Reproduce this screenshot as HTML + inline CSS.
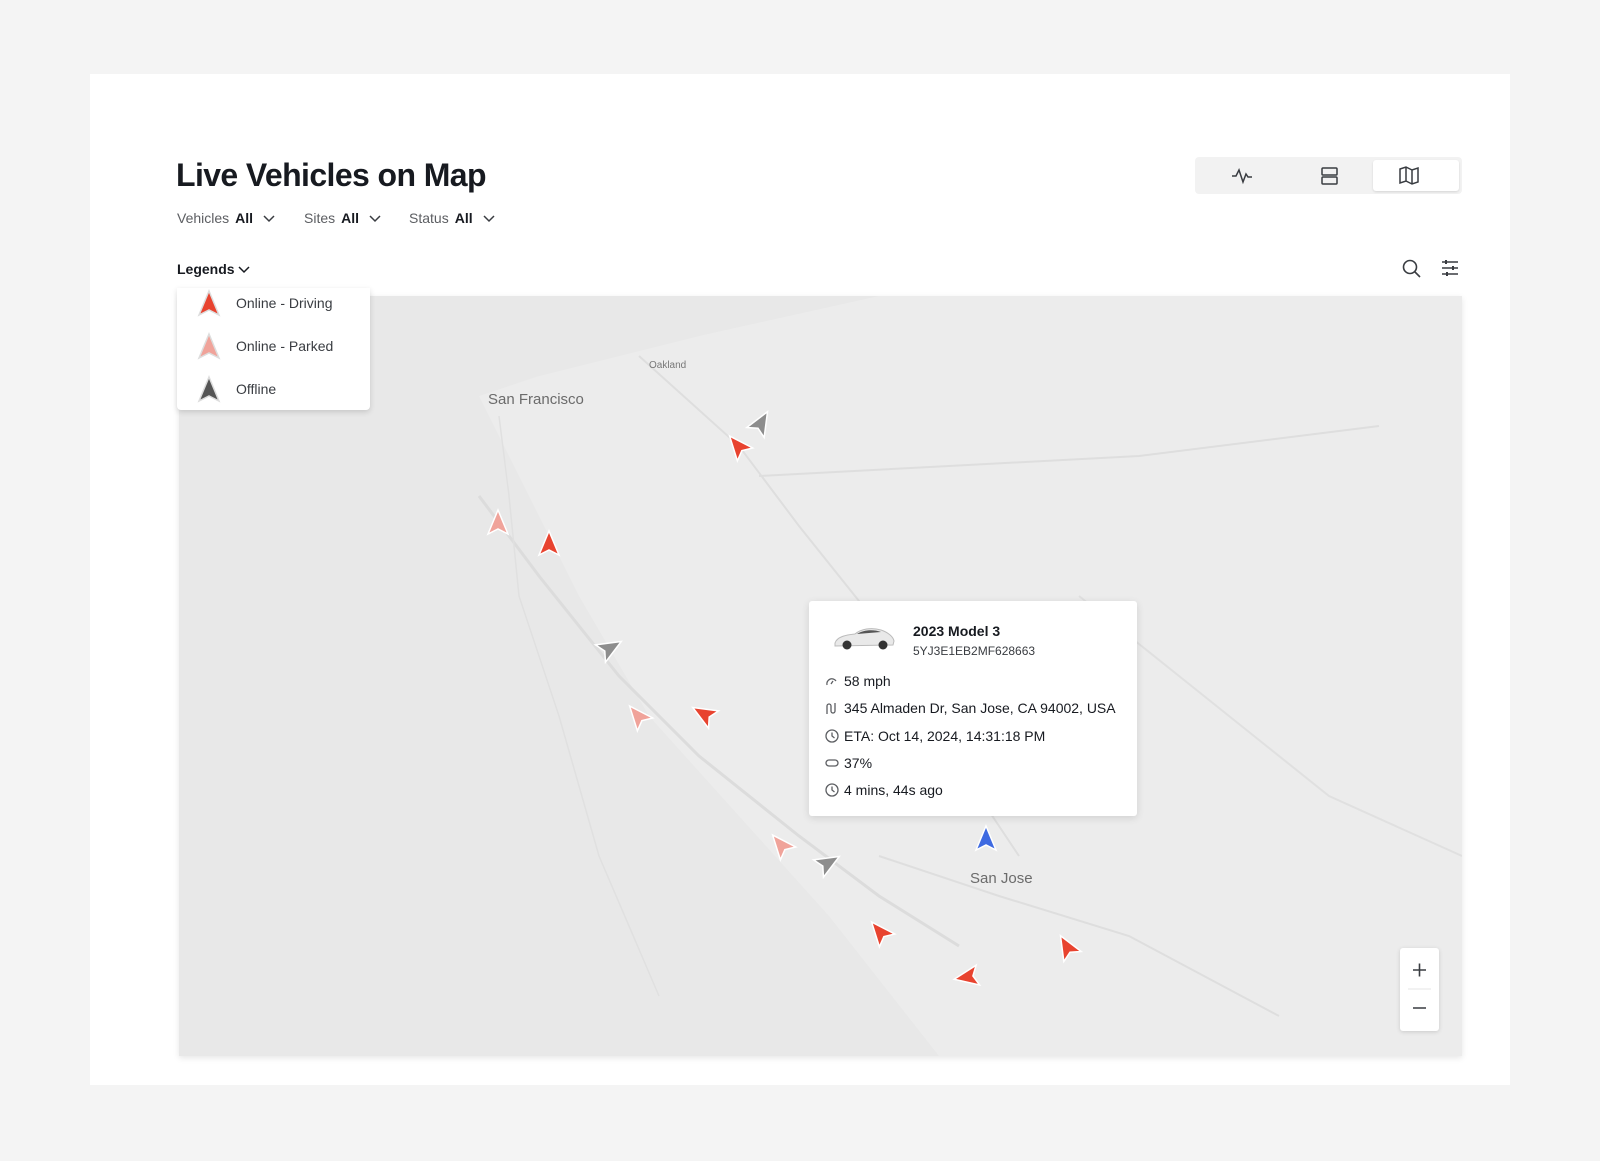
<!DOCTYPE html>
<html><head><meta charset="utf-8">
<style>
*{margin:0;padding:0;box-sizing:border-box}
body{width:1600px;height:1161px;background:#f4f4f4;font-family:"Liberation Sans",Arial,sans-serif;color:#171a20;position:relative;overflow:hidden}
.card{position:absolute;left:90px;top:74px;width:1420px;height:1011px;background:#fff}
h1{position:absolute;left:176px;top:157px;font-size:32px;font-weight:700;letter-spacing:-0.6px;color:#171a20}
.filters{position:absolute;left:177px;top:210px;font-size:14px;color:#5c5e62}
.filters span{position:absolute;white-space:nowrap}
.filters b{color:#171a20;font-weight:700;margin-left:6px}
.filters svg{margin-left:10px;vertical-align:0}
.seg{position:absolute;left:1195px;top:157px;width:267px;height:37px;background:#f2f2f2;border-radius:4px}
.seg .act{position:absolute;left:178px;top:3px;width:86px;height:31px;background:#fff;border-radius:3px;box-shadow:0 1px 2px rgba(0,0,0,.12)}
.leg{position:absolute;left:177px;top:261px;font-size:14px;font-weight:700}
.map{position:absolute;left:179px;top:296px;width:1283px;height:760px;background:#eaeaea;overflow:hidden;box-shadow:0 2px 6px rgba(0,0,0,.1)}
.legbox{position:absolute;left:177px;top:288px;width:193px;height:122px;background:#fff;box-shadow:0 2px 6px rgba(0,0,0,.15);border-radius:0 0 4px 4px;font-size:14px;color:#393c41}
.legbox div{position:absolute;left:59px}
.tip{position:absolute;left:809px;top:601px;width:328px;height:215px;background:#fff;border-radius:3px;box-shadow:0 2px 8px rgba(0,0,0,.12);font-size:14px;color:#171a20}
.tip .r{position:absolute;left:35px}
.tip svg.i{position:absolute;left:16px}
.zoom{position:absolute;left:1400px;top:948px;width:39px;height:83px;background:#fff;border-radius:3px;box-shadow:0 1px 4px rgba(0,0,0,.15)}
</style></head><body>
<div class="card"></div>
<h1>Live Vehicles on Map</h1>
<div class="filters">
<span style="left:0">Vehicles<b>All</b><svg width="12" height="8"><path d="M1 1l5 5 5-5" stroke="#393c41" stroke-width="1.5" fill="none"/></svg></span>
<span style="left:127px">Sites<b>All</b><svg width="12" height="8"><path d="M1 1l5 5 5-5" stroke="#393c41" stroke-width="1.5" fill="none"/></svg></span>
<span style="left:232px">Status<b>All</b><svg width="12" height="8"><path d="M1 1l5 5 5-5" stroke="#393c41" stroke-width="1.5" fill="none"/></svg></span>
</div>
<div class="seg"><div class="act"></div>
<svg style="position:absolute;left:0;top:0" width="267" height="37" fill="none" stroke="#393c41" stroke-width="1.5">
<path d="M37 19h4l3-6 4 12 3-8 2 3h4"/>
<rect x="127" y="11" width="15" height="7" rx="1"/><rect x="127" y="20" width="15" height="7" rx="1"/>
<path d="M205 12l6-2 6 3 6-2v14l-6 2-6-3-6 2z M211 10v14 M217 13v14"/>
</svg></div>
<div class="leg">Legends <svg width="12" height="8"><path d="M1 1l5 5 5-5" stroke="#171a20" stroke-width="1.5" fill="none"/></svg></div>
<svg style="position:absolute;left:1398px;top:258px" width="60" height="22" fill="none" stroke="#393c41" stroke-width="1.6">
<circle cx="12" cy="9" r="6.5"/><path d="M17 14l5 5"/>
<path d="M44 4h16M44 10h16M44 16h16"/><path d="M48 2v4M55 8v4M49 14v4" stroke-width="2"/>
</svg>
<div class="map">
<svg width="1283" height="760" style="position:absolute;left:0;top:0">
<rect x="0" y="0" width="1283" height="760" fill="#e8e8e8"/>
<path d="M300 100 L360 80 L520 40 L700 0 L1283 0 L1283 760 L760 760 L650 620 L560 520 L470 420 L400 300 L330 160z" fill="#ececec"/>
<path d="M300 200 L360 280 L440 380 L520 460 L620 540 L700 600 L780 650" stroke="#dcdcdc" stroke-width="3" fill="none"/>
<path d="M460 60 L560 150 L620 230 L700 330 L760 420 L800 500 L840 560" stroke="#dedede" stroke-width="2" fill="none"/>
<path d="M580 180 L770 170 L960 160 L1200 130" stroke="#dedede" stroke-width="2" fill="none"/>
<path d="M700 560 L820 600 L950 640 L1100 720" stroke="#dedede" stroke-width="2" fill="none"/>
<path d="M900 300 L1000 380 L1150 500 L1283 560" stroke="#e0e0e0" stroke-width="2" fill="none"/>
<path d="M320 120 L330 200 L340 300 L380 420 L420 560 L480 700" stroke="#e0e0e0" stroke-width="1.5" fill="none"/>
<text x="309" y="108" font-size="15" fill="#6b6b6b" font-family="Liberation Sans">San Francisco</text>
<text x="791" y="587" font-size="15" fill="#6b6b6b" font-family="Liberation Sans">San Jose</text>
<text x="470" y="72" font-size="10" fill="#777" font-family="Liberation Sans">Oakland</text>
</svg>
</div>
<svg style="position:absolute;left:0;top:0" width="1600" height="1161">
<defs>
<path id="ar" d="M0 -13 L10 11 L0 6 L-10 11z"/>
</defs>
<g stroke="#fff" stroke-width="1.5">
<use href="#ar" fill="#e8432f" transform="translate(738,446) rotate(-40)"/>
<use href="#ar" fill="#e8432f" transform="translate(549,544)"/>
<use href="#ar" fill="#e8432f" transform="translate(704,714) rotate(-60)"/>
<use href="#ar" fill="#e8432f" transform="translate(880,932) rotate(-40)"/>
<use href="#ar" fill="#e8432f" transform="translate(967,977) rotate(-100)"/>
<use href="#ar" fill="#e8432f" transform="translate(1067,947) rotate(-30)"/>
<use href="#ar" fill="#f0a39a" transform="translate(498,523)"/>
<use href="#ar" fill="#f0a39a" transform="translate(638,716) rotate(-40)"/>
<use href="#ar" fill="#f0a39a" transform="translate(781,845) rotate(-40)"/>
<use href="#ar" fill="#8d8d8d" transform="translate(761,423) rotate(30)"/>
<use href="#ar" fill="#8d8d8d" transform="translate(610,648) rotate(60)"/>
<use href="#ar" fill="#8d8d8d" transform="translate(828,863) rotate(60)"/>
<use href="#ar" fill="#3e6ae1" transform="translate(986,839)"/>
</g>
</svg>
<div class="legbox">
<svg style="position:absolute;left:20px;top:0" width="30" height="122" stroke="#ddd" stroke-width="1.5">
<path d="M12 -6 L22 18 L12 13 L2 18z" transform="translate(0,9)" fill="#e8432f"/>
<path d="M12 -6 L22 18 L12 13 L2 18z" transform="translate(0,52)" fill="#f0a39a"/>
<path d="M12 -6 L22 18 L12 13 L2 18z" transform="translate(0,95)" fill="#555"/>
</svg>
<div style="top:7px">Online - Driving</div>
<div style="top:50px">Online - Parked</div>
<div style="top:93px">Offline</div>
</div>
<div class="tip">
<svg style="position:absolute;left:22px;top:22px" width="66" height="28"><path d="M4 20 C6 14 14 12 24 11 C30 6 40 4 50 7 C56 9 62 13 63 18 L62 22 L4 23z" fill="#e9e9e9" stroke="#bbb"/><path d="M26 11 C32 7 42 6 50 9z" fill="#555"/><circle cx="16" cy="22" r="4.5" fill="#333"/><circle cx="52" cy="22" r="4.5" fill="#333"/></svg>
<div class="r" style="left:104px;top:22px;font-weight:700">2023 Model 3</div>
<div class="r" style="left:104px;top:43px;font-size:12px;color:#393c41">5YJ3E1EB2MF628663</div>
<svg class="i" style="top:74px" width="13" height="12" fill="none" stroke="#5c5e62" stroke-width="1.3"><path d="M2 10a5 5 0 0 1 9-4"/><path d="M6 9l2-3"/></svg>
<div class="r" style="top:72px">58 mph</div>
<svg class="i" style="top:101px" width="13" height="13" fill="none" stroke="#5c5e62" stroke-width="1.3"><path d="M2 12V4a2 2 0 0 1 4 0v5a2 2 0 0 0 4 0V1"/></svg>
<div class="r" style="top:99px">345 Almaden Dr, San Jose, CA 94002, USA</div>
<svg class="i" style="top:128px" width="14" height="14" fill="none" stroke="#5c5e62" stroke-width="1.3"><circle cx="7" cy="7" r="6"/><path d="M7 3.5V7l2.5 2"/></svg>
<div class="r" style="top:127px">ETA: Oct 14, 2024, 14:31:18 PM</div>
<svg class="i" style="top:158px" width="14" height="9" fill="none" stroke="#5c5e62" stroke-width="1.3"><rect x="1" y="1" width="12" height="6" rx="3"/></svg>
<div class="r" style="top:154px">37%</div>
<svg class="i" style="top:182px" width="14" height="14" fill="none" stroke="#5c5e62" stroke-width="1.3"><circle cx="7" cy="7" r="6"/><path d="M7 3.5V7l2.5 2"/></svg>
<div class="r" style="top:181px">4 mins, 44s ago</div>
</div>
<div class="zoom"><svg width="39" height="83" stroke="#393c41" stroke-width="1.6"><path d="M13 22h13M19.5 15.5v13M13 60h13"/><path d="M8 41h23" stroke="#eee"/></svg></div>
</body></html>
